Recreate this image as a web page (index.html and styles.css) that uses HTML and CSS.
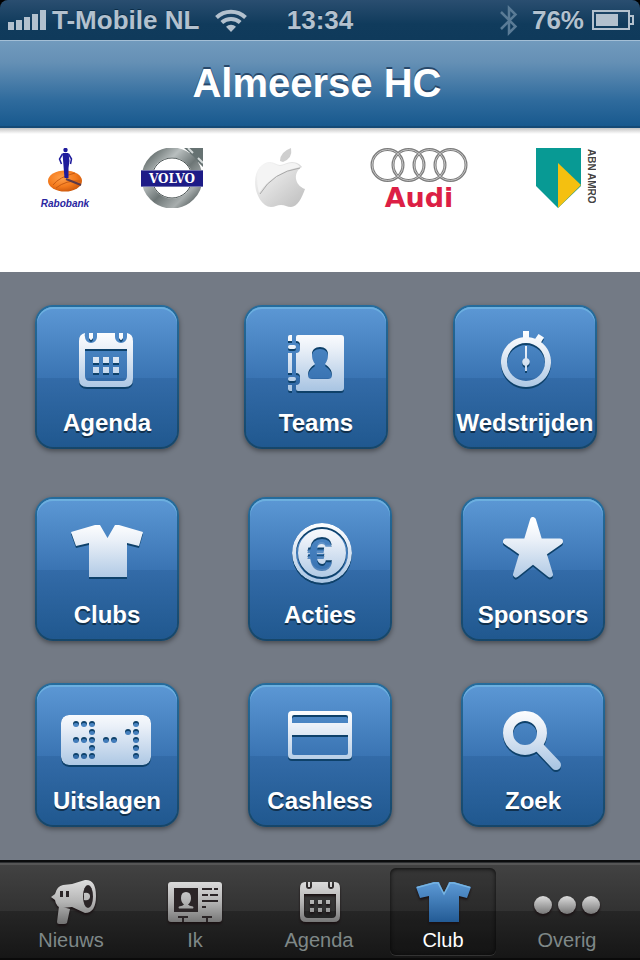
FILE: index.html
```
<!DOCTYPE html>
<html lang="nl">
<head>
    <meta charset="UTF-8">
    <meta name="viewport" content="width=device-width, initial-scale=1.0">
    <title>Almeerse HC</title>
    <link rel="stylesheet" href="styles.css">
</head>
<body>

<svg class="defs" aria-hidden="true">
    <defs>
        <linearGradient id="white" gradientUnits="userSpaceOnUse" x1="0" y1="26" x2="0" y2="84">
            <stop offset="0" stop-color="#ffffff"/>
            <stop offset="0.3" stop-color="#eaf0f8"/>
            <stop offset="1" stop-color="#abc6e3"/>
        </linearGradient>
        <linearGradient id="silver" gradientUnits="userSpaceOnUse" x1="0" y1="3" x2="0" y2="45">
            <stop offset="0" stop-color="#dcdcdc"/>
            <stop offset="0.5" stop-color="#b4b4b4"/>
            <stop offset="1" stop-color="#747474"/>
        </linearGradient>
        <linearGradient id="dots" x1="0" y1="0" x2="0" y2="1">
            <stop offset="0" stop-color="#dcdcdc"/>
            <stop offset="1" stop-color="#777777"/>
        </linearGradient>
        <linearGradient id="blue" gradientUnits="userSpaceOnUse" x1="0" y1="4" x2="0" y2="44">
            <stop offset="0" stop-color="#5d9ad6"/>
            <stop offset="1" stop-color="#235b95"/>
        </linearGradient>
        <linearGradient id="chrome" x1="0" y1="0" x2="1" y2="1">
            <stop offset="0" stop-color="#56605f"/>
            <stop offset="0.3" stop-color="#b9bfbf"/>
            <stop offset="0.55" stop-color="#6d7676"/>
            <stop offset="0.8" stop-color="#a8aeae"/>
            <stop offset="1" stop-color="#4d5656"/>
        </linearGradient>
        <linearGradient id="apple" x1="0" y1="0" x2="1" y2="1">
            <stop offset="0" stop-color="#fafafa"/>
            <stop offset="1" stop-color="#bdbdbd"/>
        </linearGradient>
        <radialGradient id="orange" cx="0.4" cy="0.35" r="0.7">
            <stop offset="0" stop-color="#ffa04a"/>
            <stop offset="0.6" stop-color="#f47a1c"/>
            <stop offset="1" stop-color="#c9560c"/>
        </radialGradient>
    </defs>
</svg>

<header>
    <div class="status-bar">
        <div class="status-left">
            <svg class="signal" width="38" height="20" viewBox="0 0 38 20">
                <path d="M0 12h6v8H0zM8 10h6v10H8zM16 7h6v13h-6zM24 4h6v16h-6zM32 0h6v20h-6z"/>
            </svg>
            <span>T-Mobile NL</span>
            <svg class="wifi" width="32" height="23" viewBox="0 0 32 23">
                <path d="M1.500 8.500a21 21 0 0 1 29 0M6.800 13.500a13.500 13.500 0 0 1 18.400 0" fill="none" stroke="#b3c1ce" stroke-width="4"/>
                <path d="M16 23l-5-5.200a7.200 7.200 0 0 1 10 0z"/>
            </svg>
        </div>
        <time>13:34</time>
        <div class="status-right">
            <svg class="bluetooth" width="18" height="31" viewBox="0 0 18 31">
                <path d="M1 7l14.500 14.500L9 28V3l6.500 6.500L1 24" fill="none" stroke="#5a7b96" stroke-width="2.500"/>
            </svg>
            <span>76%</span>
            <svg class="battery" width="42" height="20" viewBox="0 0 42 20">
                <path d="M1 1h36v18H1zM38 6h3v8h-3" fill="none" stroke="#b3c1ce" stroke-width="2"/>
                <path d="M4 4h22v12H4z"/>
            </svg>
        </div>
    </div>
    <h1 class="title-bar">Almeerse HC</h1>
</header>

<section class="sponsors">
    <svg width="50" height="60" viewBox="0 0 50 60" role="img" aria-label="Rabobank">
        <ellipse cx="25" cy="33" rx="17" ry="10.500" fill="url(#orange)"/>
        <path d="M13 37q6-8 22-12M16 40q10-8 24-7" fill="none" stroke="#c75a12" stroke-width="1"/>
        <path d="M26 31l15 6" stroke="#5b3a4a" stroke-width="2"/>
        <circle cx="25.500" cy="2" r="2.200" fill="#1f1b9c"/>
        <path d="M22.500 5h6l1 8-1 7v10h-4l-1-12z" fill="#1f1b9c"/>
        <path d="M22.500 6l-3 5 2 5M28.500 6l3 5-1 5" fill="none" stroke="#1f1b9c" stroke-width="1.500"/>
        <text class="logo-rabo" x="25" y="59">Rabobank</text>
    </svg>
    <svg width="62" height="60" viewBox="0 0 62 60" role="img" aria-label="Volvo">
        <path d="M43 0h19v19l-5-5-6 7-9-9 7-7z" fill="#667272"/>
        <path d="M47 0l5 5M57 10l5 5" stroke="#d5dada" stroke-width="2"/>
        <circle cx="31" cy="30" r="25.500" fill="none" stroke="url(#chrome)" stroke-width="10"/>
        <circle cx="31" cy="30" r="20" fill="none" stroke="#4f5858" stroke-width="1"/>
        <path d="M0 22h62v17H0z" fill="#1d1b87"/>
        <path d="M0 22.500h62M0 38.500h62" stroke="#6d6fae" stroke-width="1"/>
        <text class="logo-volvo" x="31" y="35">VOLVO</text>
    </svg>
    <svg width="50" height="60" viewBox="0 0 50 60" role="img" aria-label="Apple">
        <path d="M25 13q0-9 11-13 2 10-8 14z" fill="#cfcfcf"/>
        <path d="M25 17c4 0 7-3 12-3 5 0 9 3 10 5-9 5-8 18 3 22-3 9-8 18-14 18-4 0-6-2-10-2s-6 2-10 2C8 59 0 47 0 34c0-12 7-20 15-20 4 0 7 3 10 3z" fill="url(#apple)"/>
        <path d="M2 30C2 20 8 15 15 15c4 0 7 3 10 3s7-3 12-3c4 0 7 2 8 4Q18 24 4 45 2 38 2 30z" fill="#f4f4f4"/>
        <path d="M45 20Q18 24 5 46" fill="none" stroke="#a9a9a9" stroke-width="1"/>
    </svg>
    <svg class="logo-wide" width="98" height="60" viewBox="0 0 98 60" role="img" aria-label="Audi">
        <g fill="none" stroke="#7c7c7c" stroke-width="3">
            <circle cx="17.500" cy="17" r="15.500"/>
            <circle cx="38.500" cy="17" r="15.500"/>
            <circle cx="59.500" cy="17" r="15.500"/>
            <circle cx="80.500" cy="17" r="15.500"/>
        </g>
        <g fill="none" stroke="#c4c4c4" stroke-width="1">
            <circle cx="17.500" cy="17" r="15.500"/>
            <circle cx="38.500" cy="17" r="15.500"/>
            <circle cx="59.500" cy="17" r="15.500"/>
            <circle cx="80.500" cy="17" r="15.500"/>
        </g>
        <text class="logo-audi" x="49" y="59">Audi</text>
    </svg>
    <svg width="60" height="60" viewBox="0 0 60 60" role="img" aria-label="ABN AMRO">
        <path d="M0 0h45v38L22 60 0 38z" fill="#089a94"/>
        <path d="M22 15l23 22-23 23z" fill="#f4c010"/>
        <text class="logo-abn" transform="translate(52 1) rotate(90)" x="0" y="0">ABN AMRO</text>
    </svg>
</section>

<main>
    <div class="tile-row first">
        <button class="tile">
            <svg viewBox="2 2 140 102">
                <path fill-rule="evenodd" d="M50 28a6 7 0 0 0 0 4a6 6 0 0 0 12 0v-4h18v4a6 6 0 0 0 12 0v-4q6 1 6 8v38q0 8-8 8H52q-8 0-8-8V36q0-7 6-8zM50 44v27q0 5 5 5h32q5 0 5-5V44z"/>
                <path d="M54 28h4v5q-2 4-4 0zM84 28h4v5q-2 4-4 0zM58 52h6v6h-6zM68 52h6v6h-6zM78 52h6v6h-6zM58 62h6v6h-6zM68 62h6v6h-6zM78 62h6v6h-6z"/>
            </svg>
            <span>Agenda</span>
        </button>
        <button class="tile">
            <svg viewBox="2 2 140 102">
                <path fill-rule="evenodd" d="M54 30h43q3 0 3 3v50q0 3-3 3H54q-2 0-2-2v-4q4 0 4-4v-4q0-4-4-4V48q4 0 4-4v-4q0-4-4-4v-4q0-2 2-2zM76 42c-5 0-8 3-8 7 0 5 1 7 3 10-4 3-7 6-7 11 0 3 2 4 4 4h16c2 0 4-1 4-4 0-5-3-8-7-11 2-3 3-5 3-10 0-4-3-7-8-7z"/>
                <path d="M46 30h2v6h-4v-4q0-2 2-2zM44 48h4v20h-4zM44 80h4v6h-2q-2 0-2-2z"/>
                <rect x="44" y="40" width="8" height="4" rx="2"/>
                <rect x="44" y="72" width="8" height="4" rx="2"/>
            </svg>
            <span>Teams</span>
        </button>
        <button class="tile">
            <svg viewBox="2 2 140 102">
                <path fill-rule="evenodd" d="M70 26h6v6.200a25 25 0 1 1-6 0zM73 38a19 19 0 1 0 0 38 19 19 0 0 0 0-38z"/>
                <path d="M85.500 29l5.500 3.500-4 6.500-6-3.500z"/>
                <path d="M72 41h2v12.200a4 4 0 0 1 0 7.600V66h-2v-5.200a4 4 0 0 1 0-7.600z"/>
            </svg>
            <span>Wedstrijden</span>
        </button>
    </div>

    <div class="tile-row">
        <button class="tile">
            <svg viewBox="2 2 140 102">
                <path d="M60 28h5l7.500 13L80 28h4l24 7-4 14-12-3v34H54V46l-13 3-5-14z"/>
            </svg>
            <span>Clubs</span>
        </button>
        <button class="tile">
            <svg viewBox="2 2 140 102">
                <mask id="coin" maskUnits="userSpaceOnUse" x="40" y="20" width="70" height="70">
                    <circle cx="74" cy="56" r="30" fill="#fff"/>
                    <circle cx="74" cy="56" r="25" fill="none" stroke="#000" stroke-width="2"/>
                    <text class="euro" x="72" y="72">€</text>
                </mask>
                <circle cx="74" cy="56" r="30" mask="url(#coin)"/>
            </svg>
            <span>Acties</span>
        </button>
        <button class="tile">
            <svg viewBox="2 2 140 102">
                <path d="M72 23l6.500 21.500H99L82.500 56 89 77.500 72 64 55 77.500 61.500 56 45 44.500h20.500z" stroke="url(#white)" stroke-width="6" stroke-linejoin="round"/>
            </svg>
            <span>Sponsors</span>
        </button>
    </div>

    <div class="tile-row">
        <button class="tile">
            <svg viewBox="2 2 140 102">
                <mask id="score" maskUnits="userSpaceOnUse" x="20" y="30" width="100" height="60">
                    <rect x="26" y="32" width="90" height="50" rx="8" fill="#fff"/>
                    <path d="M41 41h.01M49 41h.01M57 41h.01M57 49h.01M41 57h.01M49 57h.01M57 57h.01M57 65h.01M41 73h.01M49 73h.01M57 73h.01M71 57h.01M79 57h.01M93 49h.01M101 41h.01M101 49h.01M101 57h.01M101 65h.01M101 73h.01" stroke="#000" stroke-width="6" stroke-linecap="round"/>
                </mask>
                <rect x="26" y="32" width="90" height="50" rx="8" mask="url(#score)"/>
            </svg>
            <span>Uitslagen</span>
        </button>
        <button class="tile">
            <svg viewBox="2 2 140 102">
                <path fill-rule="evenodd" d="M44 28h56q4 0 4 4v40q0 4-4 4H44q-4 0-4-4V32q0-4 4-4zM44 34v6h56v-6q0-2-2-2H46q-2 0-2 2zM44 52v18q0 2 2 2h52q2 0 2-2V52z"/>
            </svg>
            <span>Cashless</span>
        </button>
        <button class="tile">
            <svg viewBox="2 2 140 102">
                <g fill="none" stroke="url(#white)" stroke-width="10" stroke-linecap="round">
                    <circle cx="64" cy="50" r="17"/>
                    <path d="M78 64l17 18"/>
                </g>
            </svg>
            <span>Zoek</span>
        </button>
    </div>
</main>

<nav class="tab-bar">
    <a href="#" class="tab">
        <svg viewBox="0 0 80 48">
            <path d="M28 28l11 3-3 14q-1 1-3 1h-5q-2 0-2-2z"/>
            <path d="M20 19l4-3q2-8 8-9l9-1L54 2q11-1 11 16T54 35L41 29l-10 1q-6-1-7-8z"/>
            <ellipse cx="57" cy="18.500" rx="5" ry="11.500" fill="#2b2527"/>
            <path d="M53 15q6-1 6 3.500T53 22z"/>
            <path d="M29 13h3v6h-3zM35 13h3v6h-3z" fill="#2b2527"/>
        </svg>
        <span>Nieuws</span>
    </a>
    <a href="#" class="tab">
        <svg viewBox="0 0 80 48">
            <rect x="13" y="4" width="54" height="40" rx="3"/>
            <path d="M19 10h24v24H19zM47 10h10v2H47zM59 10h4v2h-4zM47 16h6v2h-6zM55 16h8v2h-8zM47 22h16v2H47zM47 28h4v2h-4zM23 38h10v2h-4v4h-2v-4h-4zM47 38h10v2h-4v4h-2v-4h-4z" fill="#2b2527"/>
            <path d="M31 14q5 0 5 6 0 4-3 6.500 1 1.500 5 2 1 1 0 2H24q-1-1 0-2 4-.5 5-2-3-2.500-3-6.500 0-6 5-6z"/>
        </svg>
        <span>Ik</span>
    </a>
    <a href="#" class="tab">
        <svg viewBox="0 0 80 48">
            <path fill-rule="evenodd" d="M26 4h1v4a3 3 0 0 0 6 0V4h16v4a3 3 0 0 0 6 0V4h1q5 0 5 6v28q0 6-6 6H27q-6 0-6-6V10q0-6 5-6zM25 16v20q0 4 4 4h24q4 0 4-4V16z"/>
            <path d="M29 4h2v5h-2zM51 4h2v5h-2zM31 22h4v4h-4zM39 22h4v4h-4zM47 22h4v4h-4zM31 30h4v4h-4zM39 30h4v4h-4zM47 30h4v4h-4z"/>
        </svg>
        <span>Agenda</span>
    </a>
    <a href="#" class="tab active">
        <svg viewBox="0 0 80 48">
            <path d="M31 4h5l5 11 5-11h5l17 5-4 11-8-2v26H26V18l-9 2-4-11z"/>
            <path d="M14 9.500L31 5h4l6 11 6-11h4l16 4.500" fill="none" stroke="#76b4e2" stroke-width="1.500"/>
        </svg>
        <span>Club</span>
    </a>
    <a href="#" class="tab">
        <svg viewBox="0 0 80 48">
            <g class="more">
                <circle cx="16" cy="27" r="9"/>
                <circle cx="40" cy="27" r="9"/>
                <circle cx="64" cy="27" r="9"/>
            </g>
        </svg>
        <span>Overig</span>
    </a>
</nav>

</body>
</html>
```
FILE: styles.css
```
* {
    box-sizing: border-box;
}

body {
    margin: 0;
    min-height: 100vh;
    display: flex;
    flex-direction: column;
    font-family: "Liberation Sans", Arial, sans-serif;
    background-color: #737a85;
}

.defs {
    position: absolute;
    width: 0;
    height: 0;
}

/* status bar */
header {
    background-color: #000;
}

.status-bar {
    display: grid;
    grid-template-columns: 1fr auto 1fr;
    align-items: center;
    height: 40px;
    padding: 0 6px;
    border-radius: 8px 8px 0 0;
    background: linear-gradient(#2a4e70, #103b5c 60%, #0f3a5b);
    color: #b3c1ce;
    font-size: 26px;
    font-weight: bold;
    text-shadow: 0 -1px 0 #0b2c47;
}

.status-bar svg {
    fill: #b3c1ce;
}

.status-left,
.status-right {
    display: flex;
    align-items: center;
}

.status-left {
    gap: 6px;
    padding-left: 2px;
}

.status-right {
    justify-content: flex-end;
    gap: 8px;
}

.wifi {
    margin-left: 10px;
}

.bluetooth {
    margin-right: 6px;
}

.title-bar {
    margin: 0;
    height: 88px;
    padding-right: 6px;
    border-top: 1px solid #a3bfd6;
    border-bottom: 2px solid #154a76;
    background: linear-gradient(#719abd, #6590b5 25%, #2f6b9d 70%, #18598e);
    color: #fff;
    font-size: 40px;
    line-height: 84px;
    text-align: center;
    text-shadow: 0 -2px 0 #27486a;
}

/* sponsor logos */
.sponsors {
    display: flex;
    justify-content: space-between;
    padding: 20px 44px 64px 40px;
    background: linear-gradient(#c4c4c4, #fff 6px);
}

.logo-wide {
    margin: 0 17px 0 14px;
}

.logo-rabo {
    fill: #2a259f;
    font: italic bold 10px "Liberation Sans", sans-serif;
    text-anchor: middle;
}

.logo-volvo {
    fill: #fff;
    font: bold 12px "DejaVu Serif", serif;
    text-anchor: middle;
}

.logo-audi {
    fill: #dc1f45;
    font: bold 27px "DejaVu Sans", sans-serif;
    text-anchor: middle;
}

.logo-abn {
    fill: #444;
    font: bold 10px "Liberation Sans", sans-serif;
}

/* tiles */
main {
    flex: 1;
    display: flex;
    flex-direction: column;
    gap: 42px;
    padding: 33px 0;
}

.tile-row {
    display: flex;
    justify-content: space-between;
    padding: 0 35px;
}

.tile-row.first {
    padding-right: 43px;
    margin-bottom: 6px;
}

.tile {
    width: 144px;
    height: 144px;
    padding: 0;
    display: flex;
    flex-direction: column;
    align-items: center;
    border: 2px solid transparent;
    border-radius: 18px;
    background:
        linear-gradient(#5c98d5, #3a74b3 71px, #336ba8 71px, #20588f) padding-box,
        linear-gradient(#256c9c, #164669) border-box;
    box-shadow: inset 0 2px 0 #6cafdf, 0 2px 5px rgba(0, 0, 0, 0.4);
    color: #fff;
    font-family: inherit;
    font-size: 24px;
    font-weight: bold;
    line-height: 28px;
    white-space: nowrap;
    text-shadow: 0 2px 0 #10304d;
    cursor: pointer;
}

.tile svg {
    width: 140px;
    height: 102px;
    fill: url(#white);
    filter: drop-shadow(0 2px 0 #0e416a);
}

.euro {
    fill: #000;
    font: bold 46px "Liberation Sans", sans-serif;
    text-anchor: middle;
}

/* tab bar */
.tab-bar {
    display: grid;
    grid-template-columns: repeat(5, 1fr);
    padding: 3px 11px 3px 9px;
    border-top: 2px solid #0b0c0d;
    border-bottom: 2px solid #0a0a0a;
    background: linear-gradient(#2c2e30 1px, #565656 1px, #565656 3px, #424242 3px, #323232 49px, #262626 49px, #161616);
}

.tab {
    margin: 3px 9px 0;
    padding: 10px 0 3px;
    display: flex;
    flex-direction: column;
    align-items: center;
    gap: 2px;
    border-radius: 6px;
    color: #7f8888;
    font-size: 20px;
    line-height: 24px;
    text-decoration: none;
}

.tab svg {
    width: 80px;
    height: 48px;
    fill: url(#silver);
    filter: drop-shadow(0 2px 1px #1a1113);
}

.tab .more {
    fill: url(#dots);
}

.tab.active {
    background-color: rgba(0, 0, 0, 0.15);
    box-shadow: inset 0 1px 4px rgba(0, 0, 0, 0.8), 0 1px 0 #333;
    color: #fff;
}

.tab.active svg {
    fill: url(#blue);
}
```
